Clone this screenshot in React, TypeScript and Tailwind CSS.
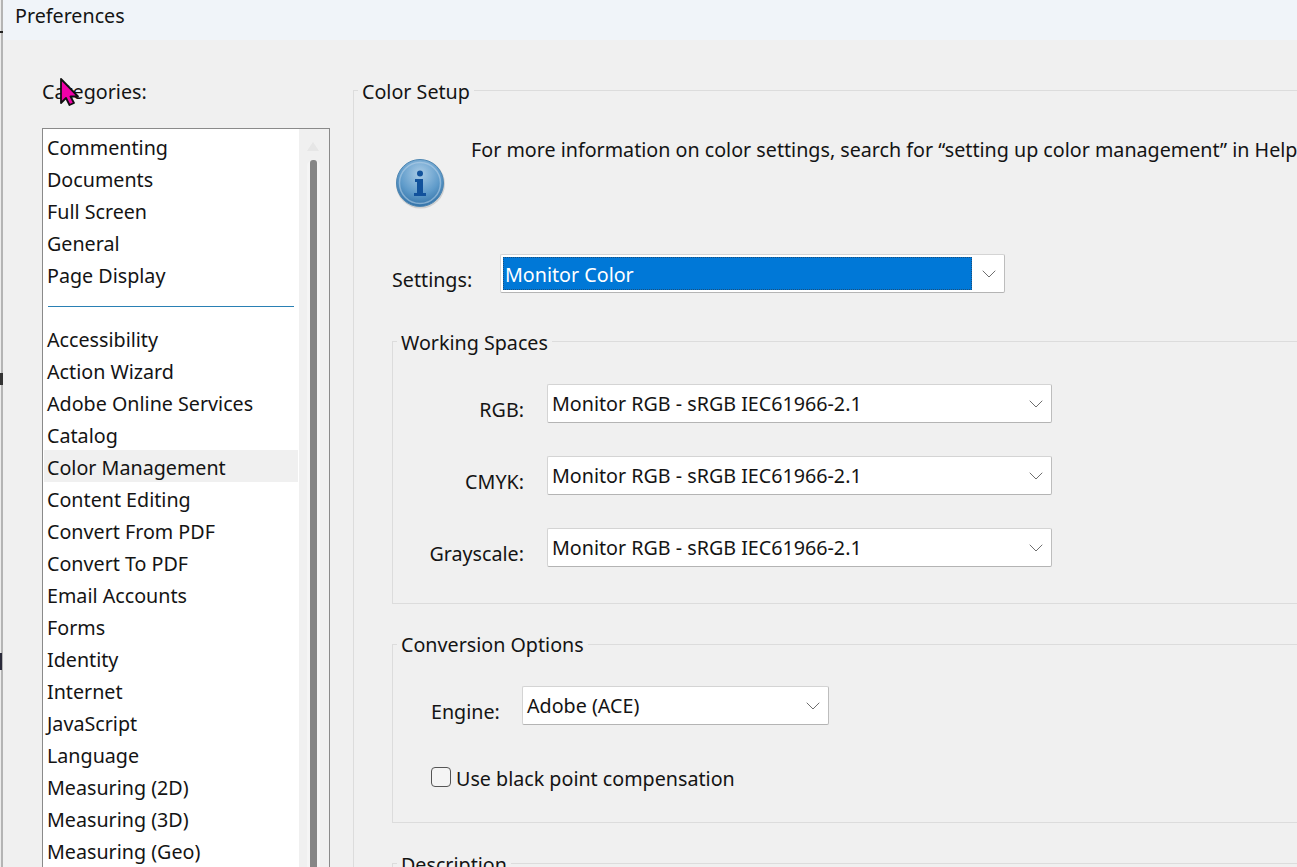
import { ChevronDown } from "lucide-react";

const pinned = ["Commenting", "Documents", "Full Screen", "General", "Page Display"];
const categories = [
  "Accessibility",
  "Action Wizard",
  "Adobe Online Services",
  "Catalog",
  "Color Management",
  "Content Editing",
  "Convert From PDF",
  "Convert To PDF",
  "Email Accounts",
  "Forms",
  "Identity",
  "Internet",
  "JavaScript",
  "Language",
  "Measuring (2D)",
  "Measuring (3D)",
  "Measuring (Geo)",
];

function Select({ value, className }: { value: string; className: string }) {
  return (
    <div className={`flex items-center justify-between bg-white border border-[#d4d4d4] border-r-[#bdbdbd] border-b-[#b4b4b4] rounded-[2px] pl-[4px] pr-[3px] ${className}`}>
      <span>{value}</span>
      <ChevronDown className="w-[24px] h-[24px] text-[#6e6e6e]" strokeWidth={1} />
    </div>
  );
}

function ProfileRow({ label }: { label: string }) {
  return (
    <div className="flex items-center">
      <span className="w-[131px] text-right pt-[13px]">{label}</span>
      <Select value="Monitor RGB - sRGB IEC61966-2.1" className="ml-[23px] w-[505px] h-[39px]" />
    </div>
  );
}

export default function App() {
  return (
    <div className="relative w-[1297px] h-[867px] overflow-hidden flex flex-col bg-[#f0f0f0] pl-[3px] text-[19.7px] leading-[30px] text-[#141414] font-['Noto_Sans',sans-serif]">
      <div className="h-[40px] shrink-0 bg-[#f0f4f9] pl-[12px] pt-[1px]">Preferences</div>

      <div className="flex flex-1 min-h-0">
        {/* left list */}
        <div className="w-[350px] shrink-0 pl-[39px] pt-[37px]">
          <div>Categories:</div>
          <div className="mt-[21px] w-[288px] h-[760px] flex bg-white border border-[#8a8a8a] border-b-0">
            <div className="w-[256px] pl-[1px] pt-[3px] leading-[32px]">
              {pinned.map((item) => (
                <div key={item} className="h-[32px] pl-[3px]">{item}</div>
              ))}
              <div className="h-[32px] pt-[14px] pl-[4px] pr-[5px]">
                <div className="h-px bg-[#2a80b4]" />
              </div>
              {categories.map((item) => (
                <div key={item} className={item === "Color Management" ? "h-[32px] -mt-[2px] mb-[2px] pt-[2px] pl-[3px] mr-[1px] bg-[#f0f0f0]" : "h-[32px] pl-[3px]"}>{item}</div>
              ))}
            </div>
            <div className="flex-1 bg-[#f0f0f0] flex flex-col items-center pr-[2px]">
              <div className="mt-[13px] w-0 h-0 border-x-[6px] border-x-transparent border-b-[9px] border-b-[#e6e6e6]" />
              <div className="mt-[9px] w-[13px] flex-1 flex justify-center rounded-t-[6px] bg-[#f5f5f5]">
                <div className="w-[7px] rounded-t-[3px] bg-[#868686]" />
              </div>
            </div>
          </div>
        </div>

        {/* right panel */}
        <fieldset className="flex-1 min-w-0 border-l border-t border-[#dcdcdc] mt-[35px] h-[800px]">
          <legend className="relative top-[2px] ml-[4px] px-[4px]">Color Setup</legend>
          <div className="pl-[38px]">
            <div className="flex h-[148px] pt-[30px]">
              <svg viewBox="0 0 52 52" className="w-[52px] h-[52px] ml-[2px] mt-[22px] shrink-0">
                <defs>
                  <radialGradient id="infoBall" cx="50%" cy="30%" r="72%">
                    <stop offset="0%" stopColor="#a9cbe6" />
                    <stop offset="60%" stopColor="#5f9bca" />
                    <stop offset="100%" stopColor="#2f6fa5" />
                  </radialGradient>
                </defs>
                <circle cx="26.5" cy="27" r="24.5" fill="#000" opacity="0.13" />
                <circle cx="26" cy="26" r="23.5" fill="url(#infoBall)" stroke="#4f87b3" />
                <circle cx="26" cy="26" r="20.5" fill="none" stroke="#b9d4ea" strokeWidth="1.5" opacity="0.55" />
                <circle cx="26" cy="16.5" r="3" fill="#12529c" />
                <path d="M21 22h8v14h3v3H20v-3h3v-11h-2z" fill="#12529c" />
              </svg>
              <div className="ml-[25px] whitespace-nowrap">For more information on color settings, search for “setting up color management” in Help.</div>
            </div>

            <div className="flex items-center -mt-[1px]">
              <span className="w-[108px] pt-[13px]">Settings:</span>
              <div className="w-[505px] h-[39px] flex items-center justify-between bg-white border border-[#d4d4d4] border-r-[#bdbdbd] border-b-[#b4b4b4] rounded-[2px] pl-[2px] pr-[3px]">
                <span className="w-[469px] h-[33px] bg-[#0078d7] text-white pl-[2px] leading-[35px] outline-1 -outline-offset-1 outline-dotted outline-[#1d4f7a]">Monitor Color</span>
                <ChevronDown className="w-[24px] h-[24px] text-[#6e6e6e]" strokeWidth={1} />
              </div>
            </div>

            <fieldset className="mt-[31px] border border-r-0 border-[#dcdcdc] h-[278px]">
              <legend className="relative top-[2px] ml-[4px] px-[4px]">Working Spaces</legend>
              <div className="flex flex-col gap-[29px] pt-[26px]">
                <ProfileRow label="RGB:" />
                <ProfileRow label="CMYK:" />
                <ProfileRow label="Grayscale:" />
              </div>
            </fieldset>

            <fieldset className="mt-[25px] border border-r-0 border-[#dcdcdc] h-[194px]">
              <legend className="relative top-[1px] ml-[4px] px-[4px]">Conversion Options</legend>
              <div className="flex items-center mt-[25px] pl-[38px]">
                <span className="w-[91px] pt-[13px]">Engine:</span>
                <Select value="Adobe (ACE)" className="w-[307px] h-[39px]" />
              </div>
              <div className="flex items-center mt-[35px] pl-[38px]">
                <span className="w-[20px] h-[20px] rounded-[4px] border border-[#555] bg-[#f4f4f4]" />
                <span className="relative top-[2px] ml-[5px]">Use black point compensation</span>
              </div>
            </fieldset>

            <fieldset className="mt-[25px] border border-r-0 border-[#dcdcdc] h-[100px]">
              <legend className="relative top-[2px] ml-[4px] px-[4px]">Description</legend>
            </fieldset>
          </div>
        </fieldset>
      </div>

      {/* window edge, with scraps of the window behind it */}
      <div className="absolute left-0 top-0 w-[3px] h-full bg-[#b4b4b4] border-l border-[#ececec]" />
      <div className="absolute left-0 top-[31px] w-[3px] h-[2px] bg-[#222]" />
      <div className="absolute left-0 top-[373px] w-[3px] h-[12px] bg-[#333]" />
      <div className="absolute left-0 top-[653px] w-[2px] h-[17px] bg-[#2a2a3a]" />

      {/* pointer highlight */}
      <svg viewBox="0 0 20 29" className="absolute left-[59px] top-[78px] w-[20px] h-[29px]">
        <path d="M2 1v24l5-5 3.5 7 4.5-2-3.5-6.5h7.5z" fill="#f000a8" stroke="#111" strokeWidth="1.8" strokeLinejoin="round" />
      </svg>
    </div>
  );
}
